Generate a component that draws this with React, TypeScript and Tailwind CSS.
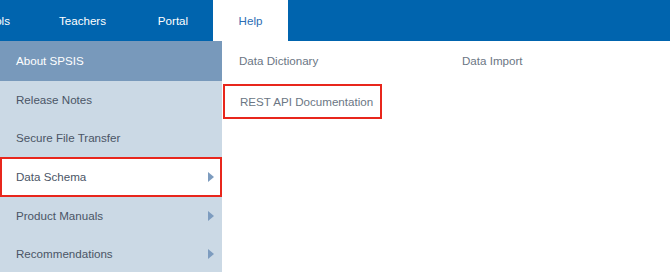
const sideItems = [
  { label: "About SPSIS", active: true },
  { label: "Release Notes" },
  { label: "Secure File Transfer" },
  { label: "Data Schema", arrow: true, selected: true },
  { label: "Product Manuals", arrow: true },
  { label: "Recommendations", arrow: true },
];

const Arrow = () => (
  <svg width="6" height="10" viewBox="0 0 6 10" className="shrink-0">
    <path d="M0 0 L6 5 L0 10 Z" fill="#7d9cbf" />
  </svg>
);

const App = () => {
  return (
    <div
      className="w-[670px] h-[272px] overflow-hidden bg-white text-[11.6px]"
      style={{ fontFamily: '"Liberation Sans", Arial, sans-serif' }}
    >
      <header className="flex h-[41px] bg-[#0064ae] text-white">
        <div className="flex w-[32px] justify-end overflow-hidden pr-[22px] items-center whitespace-nowrap">
          Schools
        </div>
        <div className="flex w-[101px] items-center justify-center">Teachers</div>
        <div className="flex w-[80px] items-center justify-center">Portal</div>
        <div className="flex w-[75px] items-center justify-center bg-white text-[#2b6db4]">
          Help
        </div>
      </header>

      <div className="flex">
        <ul className="w-[222px] bg-[#cbd9e5]">
          {sideItems.map((item) =>
            item.selected ? (
              <li
                key={item.label}
                className="flex h-[40px] items-center justify-between border-2 border-[#e8261c] bg-white pl-[14px] pr-[6px] text-[#4a5566]"
              >
                {item.label}
                <Arrow />
              </li>
            ) : (
              <li
                key={item.label}
                className={
                  item.active
                    ? "flex h-[40px] items-center bg-[#7899bb] px-[16px] text-white"
                    : "flex h-[38px] items-center justify-between pl-[16px] pr-[8px] text-[#4a5566]"
                }
              >
                {item.label}
                {item.arrow && <Arrow />}
              </li>
            )
          )}
        </ul>

        <section className="flex-1 text-[#6b7684]">
          <div className="grid grid-cols-[223px_1fr]">
            <div className="flex h-[40px] items-center pl-[17px]">Data Dictionary</div>
            <div className="flex h-[40px] items-center pl-[17px]">Data Import</div>
            <div className="pl-[1px] pt-[3px]">
              <div className="flex h-[35px] w-[159px] items-center border-2 border-[#e8261c] pl-[15px] whitespace-nowrap">
                REST API Documentation
              </div>
            </div>
          </div>
        </section>
      </div>
    </div>
  );
};

export default App;
